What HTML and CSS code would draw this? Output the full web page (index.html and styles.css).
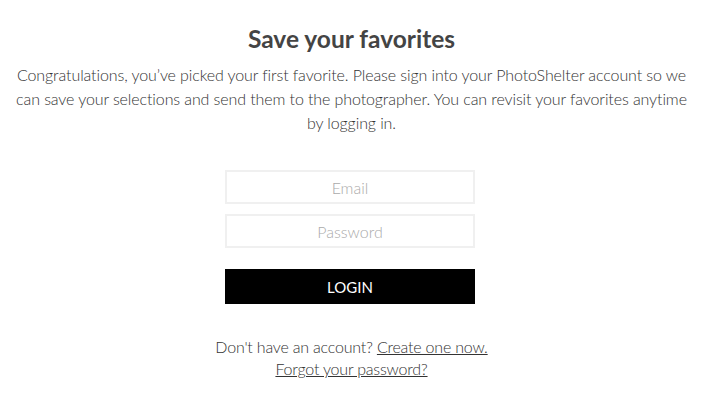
FILE: index.html
```html
<!DOCTYPE html>
<html>
<head>
<meta charset="utf-8">
<link rel="stylesheet" href="styles.css">
</head>
<body>
<main class="panel">
  <h1 class="title">Save your favorites</h1>
  <p class="intro">Congratulations, you’ve picked your first favorite. Please sign into your PhotoShelter account so we can save your selections and send them to the photographer. You can revisit your favorites anytime by logging in.</p>
  <form class="login-form">
    <input class="field" type="text" placeholder="Email">
    <input class="field" type="password" placeholder="Password">
    <button class="login-btn" type="button">LOGIN</button>
  </form>
  <div class="links">
    <p>Don't have an account? <a href="#">Create one now.</a></p>
    <p><a href="#">Forgot your password?</a></p>
  </div>
</main>
</body>
</html>
```
FILE: styles.css
```css
html, body {
  margin: 0;
  padding: 0;
  background: #fff;
}
body {
  font-family: Lato, "Open Sans", sans-serif;
  color: #333;
}
.panel {
  display: flex;
  flex-direction: column;
  align-items: center;
  padding: 23px 10px 0;
  text-align: center;
}
.title {
  margin: 0;
  font-size: 24.5px;
  font-weight: 700;
  line-height: 32px;
  color: #444;
}
.intro {
  margin: 8px 0 0;
  font-size: 16px;
  font-weight: 300;
  line-height: 24px;
  letter-spacing: -0.1px;
  color: #333;
}
.login-form {
  display: flex;
  flex-direction: column;
  width: 250px;
  margin: 35px 3px 0 0;
}
.field {
  box-sizing: border-box;
  height: 34px;
  margin: 0 0 10px;
  border: 2px solid #f0f0f0;
  background: #fff;
  font-family: Lato, sans-serif;
  font-size: 16px;
  font-weight: 300;
  text-align: center;
  color: #333;
  outline: none;
}
.field::placeholder {
  color: #aaa;
}
.login-btn {
  height: 35px;
  margin-top: 11px;
  border: 0;
  background: #000;
  color: #fff;
  font-family: Lato, sans-serif;
  font-size: 15px;
  font-weight: 400;
}
.links {
  margin-top: 32px;
  font-size: 16px;
  font-weight: 300;
  line-height: 22px;
  letter-spacing: -0.2px;
  color: #333;
}
.links p {
  margin: 0;
}
.links a {
  color: #333;
  text-decoration: underline;
}
```
